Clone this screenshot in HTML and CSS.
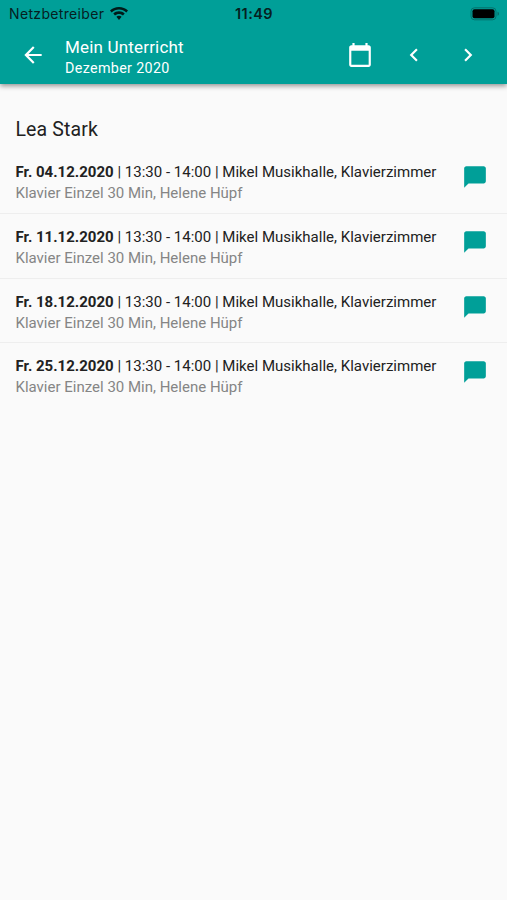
FILE: index.html
```html
<!DOCTYPE html>
<html lang="de">
<head>
<meta charset="utf-8">
<title>Mein Unterricht</title>
<link rel="stylesheet" href="styles.css">
</head>
<body>
<header class="header">
  <div class="status">
    <div class="carrier"><span class="carrier-name">Netzbetreiber</span>
      <svg class="wifi" viewBox="0 0 18 14"><path d="M9 0C5.500 0 2.300 1.400 0 3.600L1.700 5.400C3.600 3.600 6.200 2.500 9 2.500s5.400 1.100 7.300 2.900L18 3.600C15.700 1.400 12.500 0 9 0zM9 4.200c-2.200 0-4.200.9-5.700 2.300L5 8.500C6.100 7.500 7.500 6.900 9 6.900s2.900.6 4 1.600l1.700-2C13.200 5.100 11.200 4.200 9 4.200zM9 8.700c-1 0-1.900.4-2.600 1L9 13l2.600-3.300c-.7-.6-1.600-1-2.600-1z"/></svg>
    </div>
    <time class="clock">11:49</time>
    <svg class="battery" viewBox="0 0 30 14"><rect class="battery-frame" x="1" y=".8" width="25" height="12" rx="3.500"/><rect x="2.500" y="2.300" width="22" height="9" rx="2"/><path class="battery-cap" d="M27.500 4.800c2 .5 2 3.500 0 4z"/></svg>
  </div>
  <nav class="toolbar">
    <svg class="icon" viewBox="0 0 24 24"><path d="M20 11H7.830l5.590-5.590L12 4l-8 8 8 8 1.410-1.410L7.830 13H20z"/></svg>
    <div class="titles"><h1 class="title">Mein Unterricht</h1><div class="subtitle">Dezember 2020</div></div>
    <div class="actions">
      <svg class="icon" viewBox="0 0 24 24"><path d="M20 3h-1V1h-2v2H7V1H5v2H4c-1.100 0-2 .9-2 2v16c0 1.100.9 2 2 2h16c1.100 0 2-.9 2-2V5c0-1.100-.9-2-2-2zm0 18H4V8h16z"/></svg>
      <svg class="icon" viewBox="0 0 24 24"><path d="M15.410 7.410L14 6l-6 6 6 6 1.410-1.410L10.830 12z"/></svg>
      <svg class="icon" viewBox="0 0 24 24"><path d="M10 6L8.590 7.410 13.170 12l-4.580 4.590L10 18l6-6z"/></svg>
    </div>
  </nav>
</header>
<main>
  <h2 class="student">Lea Stark</h2>
  <ul class="lessons">
    <li class="lesson"><div><p class="when"><b>Fr. 04.12.2020</b><span> | 13:30 - 14:00 | Mikel Musikhalle, Klavierzimmer</span></p><p class="what">Klavier Einzel 30 Min, Helene Hüpf</p></div><svg class="icon chat" viewBox="0 0 24 24"><path d="M20 2H4c-1.100 0-2 .9-2 2v18l4-4h14c1.100 0 2-.9 2-2V4c0-1.100-.9-2-2-2z"/></svg></li>
    <li class="lesson"><div><p class="when"><b>Fr. 11.12.2020</b><span> | 13:30 - 14:00 | Mikel Musikhalle, Klavierzimmer</span></p><p class="what">Klavier Einzel 30 Min, Helene Hüpf</p></div><svg class="icon chat" viewBox="0 0 24 24"><path d="M20 2H4c-1.100 0-2 .9-2 2v18l4-4h14c1.100 0 2-.9 2-2V4c0-1.100-.9-2-2-2z"/></svg></li>
    <li class="lesson"><div><p class="when"><b>Fr. 18.12.2020</b><span> | 13:30 - 14:00 | Mikel Musikhalle, Klavierzimmer</span></p><p class="what">Klavier Einzel 30 Min, Helene Hüpf</p></div><svg class="icon chat" viewBox="0 0 24 24"><path d="M20 2H4c-1.100 0-2 .9-2 2v18l4-4h14c1.100 0 2-.9 2-2V4c0-1.100-.9-2-2-2z"/></svg></li>
    <li class="lesson"><div><p class="when"><b>Fr. 25.12.2020</b><span> | 13:30 - 14:00 | Mikel Musikhalle, Klavierzimmer</span></p><p class="what">Klavier Einzel 30 Min, Helene Hüpf</p></div><svg class="icon chat" viewBox="0 0 24 24"><path d="M20 2H4c-1.100 0-2 .9-2 2v18l4-4h14c1.100 0 2-.9 2-2V4c0-1.100-.9-2-2-2z"/></svg></li>
  </ul>
</main>
</body>
</html>
```
FILE: styles.css
```css
* { box-sizing: border-box; }
body { margin: 0; min-height: 900px; background: #fafafa; color: #212121; font-family: Roboto, "Liberation Sans", sans-serif; }
h1, h2, p, ul { margin: 0; padding: 0; font-weight: 400; }
ul { list-style: none; }
svg { display: block; flex: none; }
.header { height: 84px; background: #009f98; box-shadow: 0 2px 5px rgba(0, 0, 0, .42); }
.status { height: 27px; display: grid; grid-template-columns: 1fr auto 1fr; align-items: center; padding: 0 7px 0 9px; color: #06201f; font-family: Inter, Roboto, sans-serif; }
.carrier { display: flex; align-items: center; gap: 6px; font-size: 14px; letter-spacing: .34px; }
.wifi { width: 18px; height: 14px; fill: #001b1a; }
.clock { margin-left: -1px; font-size: 14.500px; font-weight: 600; letter-spacing: .4px; }
.battery { width: 30px; height: 14px; justify-self: end; }
.battery-frame { fill: none; stroke: #05716c; stroke-width: 1; }
.battery-cap { fill: #05716c; }
.toolbar { height: 56px; display: flex; align-items: center; padding: 0 26px 0 20px; color: #fff; }
.icon { width: 26px; height: 26px; fill: currentColor; }
.titles { margin-left: 19px; padding-top: 4px; }
.title { font-size: 17px; line-height: 20px; letter-spacing: .18px; }
.subtitle { padding-top: 1px; margin-bottom: -1px; font-size: 14.300px; line-height: 20px; letter-spacing: .35px; }
.actions { margin-left: auto; display: flex; gap: 28px; }
.student { padding: 34px 15.500px 0; font-size: 19.500px; line-height: 24px; letter-spacing: .12px; }
.lessons { padding-top: 7px; }
.lesson { height: 64.800px; display: flex; justify-content: space-between; padding: 13px 19px 0 15.500px; border-bottom: 1px solid #eeeeee; }
.lesson:last-child { border-bottom: 0; }
.when { font-size: 15px; line-height: 21px; white-space: nowrap; letter-spacing: .01px; }
.when b { font-weight: 700; }
.what { font-size: 15px; line-height: 21px; color: #858585; }
.chat { margin-top: 2.200px; color: #009f98; }
```
